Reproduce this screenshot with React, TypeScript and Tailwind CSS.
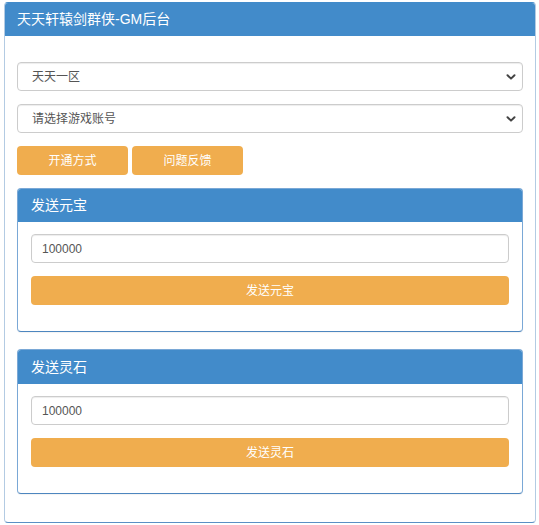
import React from "react";

const FONT = "font-['Liberation_Sans','Noto_Sans_CJK_SC',sans-serif]";

function Chevron() {
  return (
    <svg
      className="pointer-events-none absolute right-[6px] top-1/2 -translate-y-1/2"
      width="12"
      height="12"
      viewBox="0 0 12 12"
    >
      <path d="M2.5 4.2 L6 7.6 L9.5 4.2" fill="none" stroke="#444" strokeWidth="2" strokeLinecap="round" strokeLinejoin="round" />
    </svg>
  );
}

function Picker({ options }: { options: string[] }) {
  return (
    <div className="relative w-[506px]">
      <select
        defaultValue={options[0]}
        className="h-[29px] w-full appearance-none rounded-[4px] border border-[#ccc] bg-white pl-[14px] text-[12px] text-[#555] shadow-[inset_0_1px_1px_rgba(0,0,0,0.075)] outline-none"
      >
        {options.map((o) => (
          <option key={o}>{o}</option>
        ))}
      </select>
      <Chevron />
    </div>
  );
}

function SendPanel({ title, headH, bottom }: { title: string; headH: string; bottom: string }) {
  return (
    <div className="w-[506px] overflow-hidden rounded-[4px] border border-[#7aa8d6] border-b-[#4d86bf] bg-white shadow-[0_1px_1px_rgba(0,0,0,0.05)]">
      <div className={`flex ${headH} items-center bg-[#428bca] px-[13px] text-[14px] text-white`}>{title}</div>
      <div className={`flex flex-col gap-[13px] px-[13px] pt-[12px] ${bottom}`}>
        <input
          defaultValue="100000"
          className="h-[29px] w-[478px] rounded-[4px] border border-[#ccc] px-[10px] text-[12px] text-[#555] shadow-[inset_0_1px_1px_rgba(0,0,0,0.075)] outline-none"
        />
        <button className="h-[29px] w-[478px] rounded-[4px] bg-[#f0ad4e] text-[12px] text-white">{title}</button>
      </div>
    </div>
  );
}

export default function App() {
  return (
    <div className={`h-[525px] w-[539px] bg-white pl-[4px] pt-[2px] ${FONT}`}>
      <div className="w-[532px] overflow-hidden rounded-[4px] border border-[#b3cbe3] border-b-[#5a8fc4] border-t-[#428bca]">
        {/* title bar */}
        <div className="flex h-[33px] items-center bg-[#428bca] px-[12px] text-[14px] text-white">天天轩辕剑群侠-GM后台</div>

        <div className="flex flex-col px-[12px] pb-[28px] pt-[26px]">
          <div className="flex flex-col gap-[13px]">
            <Picker options={["天天一区"]} />
            <Picker options={["请选择游戏账号"]} />
          </div>

          <div className="mt-[13px] flex gap-[4px]">
            <button className="h-[29px] w-[111px] rounded-[4px] bg-[#f0ad4e] text-[12px] text-white">开通方式</button>
            <button className="h-[29px] w-[111px] rounded-[4px] bg-[#f0ad4e] text-[12px] text-white">问题反馈</button>
          </div>

          <div className="mt-[13px] flex flex-col gap-[17px]">
            <SendPanel title="发送元宝" headH="h-[33px]" bottom="pb-[26px]" />
            <SendPanel title="发送灵石" headH="h-[34px]" bottom="pb-[26px]" />
          </div>
        </div>
      </div>
    </div>
  );
}
